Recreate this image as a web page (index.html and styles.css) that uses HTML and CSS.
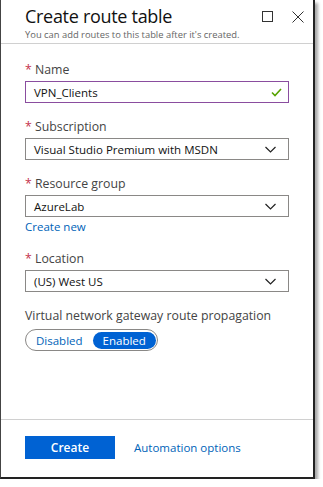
FILE: index.html
```html
<!DOCTYPE html>
<html lang="en">

<head>
    <meta charset="UTF-8">
    <meta name="viewport" content="width=device-width, initial-scale=1.0">
    <title>Create route table</title>
    <link rel="stylesheet" href="styles.css">
</head>

<body>
    <div class="blade">
        <div class="blade-header">
            <div class="titles">
                <h1>Create route table</h1>
                <p class="subtitle">You can add routes to this table after it's created.</p>
            </div>
            <div class="header-icons">
                <svg width="11" height="11" viewBox="0 0 11 11"><rect x="0.5" y="0.5" width="10" height="10" fill="none" stroke="#333" stroke-width="1"/></svg>
                <svg width="12" height="12" viewBox="0 0 12 12"><path d="M0.5 0.5 L11.5 11.5 M11.5 0.5 L0.5 11.5" stroke="#333" stroke-width="1"/></svg>
            </div>
        </div>

        <div class="blade-content">
            <div class="field">
                <label><span class="req">*</span> Name</label>
                <div class="control valid">
                    <span>VPN_Clients</span>
                    <svg width="11" height="9" viewBox="0 0 11 9"><path d="M1 4.5 L4 7.5 L10 1" fill="none" stroke="#57a300" stroke-width="1.6"/></svg>
                </div>
            </div>

            <div class="field">
                <label><span class="req">*</span> Subscription</label>
                <div class="control">
                    <span>Visual Studio Premium with MSDN</span>
                    <svg class="chevron" width="11" height="7" viewBox="0 0 11 7"><path d="M0.5 1 L5.5 6 L10.5 1" fill="none" stroke="#222" stroke-width="1.2"/></svg>
                </div>
            </div>

            <div class="field">
                <label><span class="req">*</span> Resource group</label>
                <div class="control">
                    <span>AzureLab</span>
                    <svg class="chevron" width="11" height="7" viewBox="0 0 11 7"><path d="M0.5 1 L5.5 6 L10.5 1" fill="none" stroke="#222" stroke-width="1.2"/></svg>
                </div>
                <a class="link create-new" href="#">Create new</a>
            </div>

            <div class="field">
                <label><span class="req">*</span> Location</label>
                <div class="control">
                    <span>(US) West US</span>
                    <svg class="chevron" width="11" height="7" viewBox="0 0 11 7"><path d="M0.5 1 L5.5 6 L10.5 1" fill="none" stroke="#222" stroke-width="1.2"/></svg>
                </div>
            </div>

            <div class="field">
                <label>Virtual network gateway route propagation</label>
                <div class="toggle">
                    <span class="option">Disabled</span>
                    <span class="option selected">Enabled</span>
                </div>
            </div>
        </div>

        <div class="blade-footer">
            <button class="primary">Create</button>
            <a class="link" href="#">Automation options</a>
        </div>
    </div>
</body>

</html>
```

FILE: styles.css
```css
body {
    margin: 0;
    background-color: #fff;
    font-family: "Open Sans", "Noto Sans", Arial, sans-serif;
    color: #323130;
}

.blade {
    width: 312px;
    height: 477px;
    border-left: 1px solid #444;
    border-right: 2px solid #222;
    border-bottom: 2px solid #222;
    box-shadow: 3px 3px 3px rgba(0, 0, 0, 0.35);
    display: flex;
    flex-direction: column;
    background-color: #fff;
}

.blade-header {
    display: flex;
    justify-content: space-between;
    height: 43px;
    border-bottom: 1px solid #d0d0d0;
    padding-left: 24px;
    padding-right: 9px;
}

h1 {
    margin: 0;
    padding-top: 4px;
    font-size: 18px;
    font-weight: 400;
    line-height: 24px;
    letter-spacing: -0.3px;
    color: #111;
}

.subtitle {
    margin: 0;
    font-size: 9.4px;
    line-height: 13px;
    color: #666;
}

.header-icons {
    display: flex;
    gap: 19px;
    padding-top: 11px;
}

.blade-content {
    padding: 17px 24px 0;
}

.field {
    margin-bottom: 15px;
}

.field label {
    display: block;
    font-size: 12.3px;
    line-height: 18px;
    color: #444;
    margin-bottom: 2px;
}

.req {
    color: #c4314b;
}

.control {
    display: flex;
    justify-content: space-between;
    align-items: center;
    height: 20px;
    border: 1px solid #8a8886;
    padding: 0 12px 0 8px;
    font-size: 11.5px;
    color: #111;
}

.control.valid {
    border-color: #8a4d9f;
    padding-right: 6px;
}

.link {
    color: #0063b8;
    text-decoration: none;
    font-size: 11.5px;
}

.create-new {
    display: block;
    line-height: 16px;
    margin-top: 2px;
}

.toggle {
    display: inline-flex;
    align-items: center;
    height: 20px;
    margin-top: 2px;
    border: 1px solid #8a8886;
    border-radius: 11px;
    padding: 0 1px 0 10px;
    gap: 10px;
    font-size: 11.5px;
}

.option {
    color: #0063b8;
}

.option.selected {
    background-color: #0062d3;
    color: #fff;
    border-radius: 9px;
    padding: 0 10px;
    line-height: 17px;
}

.blade-footer {
    margin-top: auto;
    border-top: 1px solid #d0d0d0;
    height: 41px;
    padding: 16px 24px 0;
    display: flex;
    align-items: flex-start;
    gap: 19px;
}

.blade-footer .link {
    line-height: 23px;
    font-size: 11.5px;
}

button.primary {
    width: 90px;
    height: 23px;
    border: none;
    background-color: #0062d3;
    color: #fff;
    font-family: inherit;
    font-size: 12px;
    font-weight: 600;
}
```
